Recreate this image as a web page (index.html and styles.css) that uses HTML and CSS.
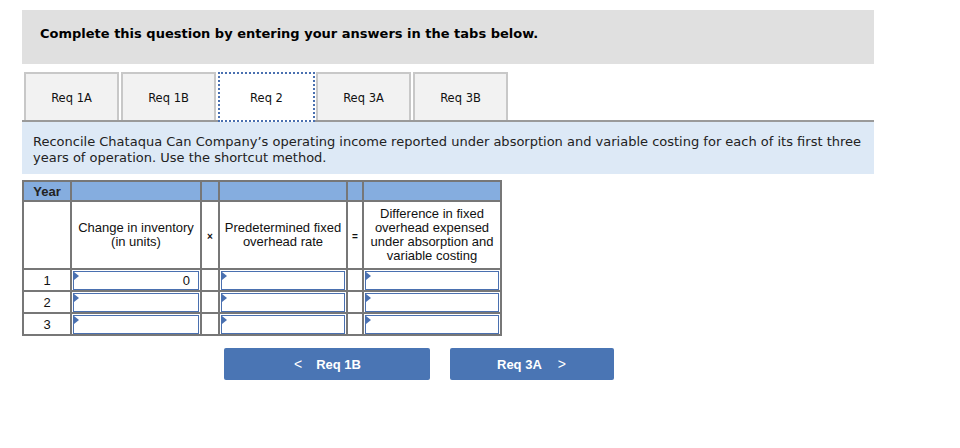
FILE: index.html
```html
<!DOCTYPE html>
<html>
<head>
<meta charset="utf-8">
<link rel="stylesheet" href="styles.css">
</head>
<body>
<div class="page">
  <div class="q-head">Complete this question by entering your answers in the tabs below.</div>
  <div class="tabs">
    <div class="tab">Req 1A</div>
    <div class="tab">Req 1B</div>
    <div class="tab active">Req 2</div>
    <div class="tab">Req 3A</div>
    <div class="tab">Req 3B</div>
  </div>
  <div class="prompt">Reconcile Chataqua Can Company’s operating income reported under absorption and variable costing for each of its first three years of operation. Use the shortcut method.</div>
  <table class="grid">
    <colgroup>
      <col class="c-year"><col class="c-chg"><col class="c-op1"><col class="c-rate"><col class="c-op2"><col class="c-diff">
    </colgroup>
    <tr class="hrow">
      <th class="year">Year</th><th></th><th></th><th></th><th></th><th></th>
    </tr>
    <tr class="lrow">
      <td></td>
      <td class="lbl">Change in inventory<br>(in units)</td>
      <td class="op">×</td>
      <td class="lbl">Predetermined fixed<br>overhead rate</td>
      <td class="op">=</td>
      <td class="lbl">Difference in fixed<br>overhead expensed<br>under absorption and<br>variable costing</td>
    </tr>
    <tr class="drow">
      <td class="num">1</td>
      <td class="in"><div class="box">0</div></td>
      <td></td>
      <td class="in"><div class="box"></div></td>
      <td></td>
      <td class="in"><div class="box"></div></td>
    </tr>
    <tr class="drow">
      <td class="num">2</td>
      <td class="in"><div class="box"></div></td>
      <td></td>
      <td class="in"><div class="box"></div></td>
      <td></td>
      <td class="in"><div class="box"></div></td>
    </tr>
    <tr class="drow">
      <td class="num">3</td>
      <td class="in"><div class="box"></div></td>
      <td></td>
      <td class="in"><div class="box"></div></td>
      <td></td>
      <td class="in"><div class="box"></div></td>
    </tr>
  </table>
  <div class="nav">
    <div class="btn prev"><span class="chev">&lt;</span>Req 1B</div>
    <div class="btn next">Req 3A<span class="chev">&gt;</span></div>
  </div>
</div>
</body>
</html>
```
FILE: styles.css
```css
html, body { margin: 0; padding: 0; background: #fff; }
.page { padding: 10px 0 0 22px; width: 852px; }
.q-head {
  height: 54px; box-sizing: border-box; background: #e0e0e0;
  padding: 16px 18px 0; font: bold 13px/16px "DejaVu Sans", Verdana, sans-serif; color: #000;
}
.tabs {
  display: flex; margin-top: 8px; padding-left: 2px; height: 48px;
  border-bottom: 2px solid #9a9a9a;
}
.tab {
  width: 95px; height: 48px; box-sizing: border-box; margin-right: 2px;
  background: #f2f2f2; border: 2px solid #c8c8c8; border-bottom: none;
  font: 11.5px/48px "DejaVu Sans", Verdana, sans-serif; color: #111; text-align: center;
}
.tab.active {
  background: #fff; border: none; height: 50px; width: 97px; margin-right: 1px;
  outline: 2px dotted #4a70b0; outline-offset: -2px; line-height: 52px; position: relative; z-index: 1;
}
.prompt {
  background: #dde9f6; height: 52px; box-sizing: border-box; padding: 12px 11px 0;
  font: 13px/16px "DejaVu Sans", Verdana, sans-serif; color: #222;
}
.grid {
  margin-top: 6px; border-collapse: collapse; border: 2px solid #777;
  font-family: "Liberation Sans", Arial, sans-serif; color: #111; table-layout: fixed;
}
.grid td, .grid th { border: 2px solid #777; padding: 0; }
.c-year { width: 48px; } .c-chg { width: 130px; } .c-op1 { width: 18px; }
.c-rate { width: 128px; } .c-op2 { width: 16px; } .c-diff { width: 138px; }
.hrow th { background: #85addf; height: 18px; font-size: 13px; font-weight: bold; color: #222; }
.lrow td { height: 62px; font-size: 13px; line-height: 14px; text-align: center; }
.lrow td.lbl { vertical-align: middle; }
.lrow td.op { font-size: 10px; font-weight: bold; padding-top: 4px; }
.drow td { height: 20px; font-size: 13px; }
.drow td.num { text-align: center; }
.box {
  position: relative; height: 19px; margin: 0 1px; box-sizing: border-box;
  border: 1px solid #4a70b0; background: #fff; text-align: right; padding-right: 8px; line-height: 18px;
}
.box::before {
  content: ""; position: absolute; left: 0; top: 0;
  border-top: 4px solid transparent; border-bottom: 4px solid transparent; border-left: 5px solid #4a70b0;
}
.nav { display: flex; margin: 12px 0 0 202px; gap: 20px; }
.btn {
  height: 32px; background: #4a75b4; color: #fff; border-radius: 2px;
  font: bold 13px/32px "Liberation Sans", Arial, sans-serif; box-sizing: border-box;
}
.btn.prev { width: 206px; padding-left: 70px; }
.btn.next { width: 164px; padding-left: 47px; }
.btn .chev { font-weight: normal; font-size: 14px; }
.btn.prev .chev { margin-right: 14px; }
.btn.next .chev { margin-left: 16px; }
```
